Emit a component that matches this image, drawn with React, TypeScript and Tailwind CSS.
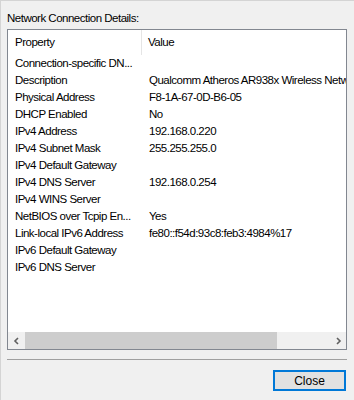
import React from "react";

const rows: [string, string][] = [
  ["Connection-specific DN...", ""],
  ["Description", "Qualcomm Atheros AR938x Wireless Network Adapter"],
  ["Physical Address", "F8-1A-67-0D-B6-05"],
  ["DHCP Enabled", "No"],
  ["IPv4 Address", "192.168.0.220"],
  ["IPv4 Subnet Mask", "255.255.255.0"],
  ["IPv4 Default Gateway", ""],
  ["IPv4 DNS Server", "192.168.0.254"],
  ["IPv4 WINS Server", ""],
  ["NetBIOS over Tcpip En...", "Yes"],
  ["Link-local IPv6 Address", "fe80::f54d:93c8:feb3:4984%17"],
  ["IPv6 Default Gateway", ""],
  ["IPv6 DNS Server", ""],
];

export default function App() {
  return (
    <div
      className="w-[354px] h-[400px] bg-[#f0f0f0] border-l border-t border-[#d4d4d4] flex flex-col text-[11.5px] tracking-[-0.5px] text-black overflow-hidden"
      style={{ fontFamily: '"Liberation Sans", Arial, sans-serif' }}
    >
      <div className="pl-[6px] pt-[10px] h-[28px] leading-[14px]">Network Connection Details:</div>
      <div className="ml-[6px] w-[340px] h-[321px] border border-[#828790] bg-white flex flex-col overflow-hidden">
        <div className="flex-1 overflow-hidden">
          <div className="flex h-[25px] items-center w-[600px]">
            <div className="w-[134px] pl-[7px] h-full flex items-center border-r border-[#e5e5e5]">Property</div>
            <div className="pl-[6px]">Value</div>
          </div>
          {rows.map(([k, v]) => (
            <div key={k} className="flex h-[17px] items-center w-[600px] whitespace-nowrap">
              <div className="w-[135px] pl-[7px] shrink-0">{k}</div>
              <div className="pl-[6px]">{v}</div>
            </div>
          ))}
        </div>
        <div className="h-[17px] flex items-center bg-[#f0f0f0]">
          <div className="w-[17px] h-full flex items-center justify-center">
            <svg width="8" height="8" viewBox="0 0 8 8">
              <path d="M5 1 L2 4 L5 7" stroke="#606060" strokeWidth="1.6" fill="none" />
            </svg>
          </div>
          <div className="flex-1 h-full flex">
            <div className="w-[252px] h-full bg-[#cdcdcd]" />
          </div>
          <div className="w-[17px] h-full flex items-center justify-center">
            <svg width="8" height="8" viewBox="0 0 8 8">
              <path d="M3 1 L6 4 L3 7" stroke="#606060" strokeWidth="1.6" fill="none" />
            </svg>
          </div>
        </div>
      </div>
      <div className="ml-[6px] mt-[9px] w-[340px] h-[1px] bg-[#a0a0a0]" />
      <div className="flex justify-end pr-[8px] mt-[10px]">
        <button className="w-[73px] h-[21px] border-2 border-[#0078d7] bg-[#e1e1e1] text-[12px] tracking-normal leading-none flex items-center justify-center">
          Close
        </button>
      </div>
    </div>
  );
}
